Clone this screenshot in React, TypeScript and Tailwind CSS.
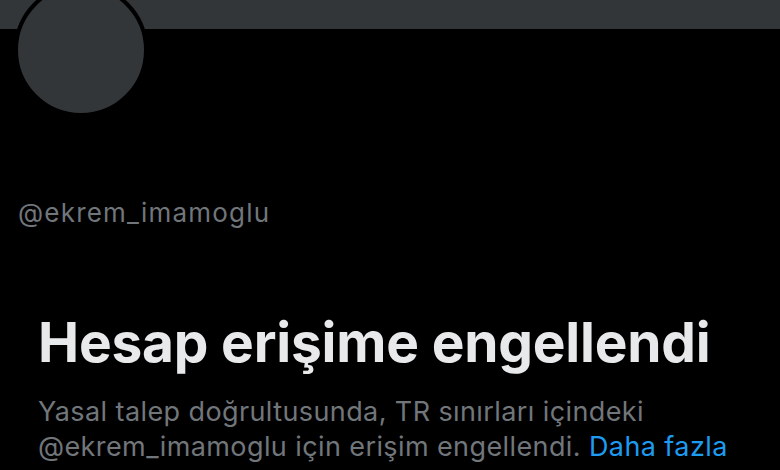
export default function App() {
  return (
    <div className="h-[470px] w-[780px] overflow-hidden bg-black font-['Inter',sans-serif]">
      {/* Banner */}
      <div className="h-[29px] w-full bg-[#333639]" />

      {/* Avatar + handle */}
      <div className="px-[14px]">
        <div className="-mt-[46px] h-[134px] w-[134px] rounded-full border-4 border-black bg-[#333639]" />
        <div className="mt-[80px] pl-[4px] text-[26px] leading-[32px] tracking-[1.2px] text-[#71767b]">
          @ekrem_imamoglu
        </div>
      </div>

      {/* Notice */}
      <div className="mt-[83px] px-[38px]">
        <h1 className="text-[55px] font-bold leading-[60px] tracking-[-0.2px] text-[#e7e9ea]">
          Hesap erişime engellendi
        </h1>
        <p className="mt-[22px] text-[27px] leading-[35px] tracking-[0.4px] text-[#71767b]">
          Yasal talep doğrultusunda, TR sınırları içindeki
          <br />
          @ekrem_imamoglu için erişim engellendi.{' '}
          <span className="text-[#1d9bf0]">Daha fazla</span>
        </p>
      </div>
    </div>
  );
}
